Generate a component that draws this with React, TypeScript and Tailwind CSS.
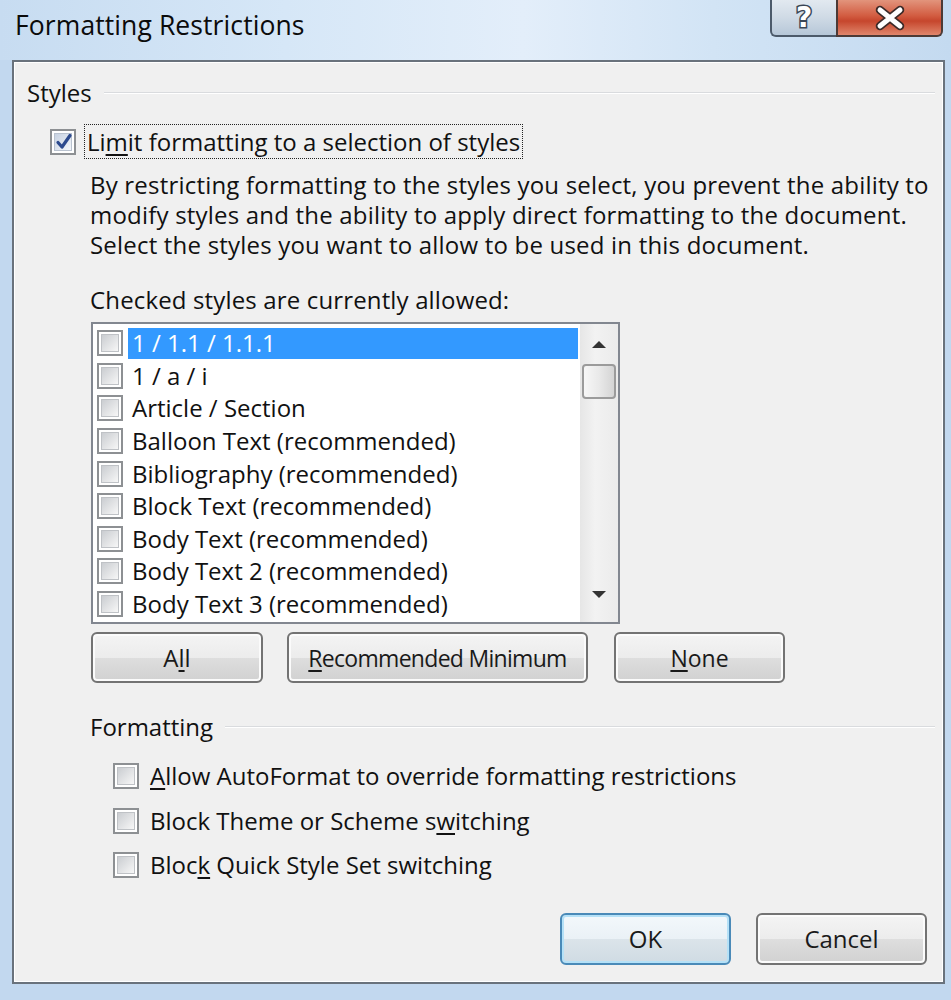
import React from "react";

const styleItems = [
  "1 / 1.1 / 1.1.1",
  "1 / a / i",
  "Article / Section",
  "Balloon Text (recommended)",
  "Bibliography (recommended)",
  "Block Text (recommended)",
  "Body Text (recommended)",
  "Body Text 2 (recommended)",
  "Body Text 3 (recommended)",
];

function CheckBox({ checked = false }: { checked?: boolean }) {
  return (
    <div className="relative w-[26px] h-[26px] shrink-0 border-2 border-[#8d9093] bg-white p-[2px]">
      <div
        className={
          checked
            ? "w-full h-full border border-[#b9c2cf] bg-[linear-gradient(135deg,#c7d2e2,#f3f6fa)]"
            : "w-full h-full border border-[#bfc2c6] bg-[linear-gradient(135deg,#cacdd1,#f7f7f7)]"
        }
      />
      {checked && (
        <svg
          className="absolute left-[3px] top-[2px]"
          width="18"
          height="18"
          viewBox="0 0 18 18"
        >
          <path
            d="M3 9.5 L7 14 L15 2.5"
            fill="none"
            stroke="#2c4a8e"
            strokeWidth="3.2"
            strokeLinecap="round"
            strokeLinejoin="round"
          />
        </svg>
      )}
    </div>
  );
}

function Key({ children }: { children: React.ReactNode }) {
  return <span className="underline underline-offset-[3px] decoration-[1.5px]">{children}</span>;
}

function WinButton({
  children,
  className,
  primary = false,
}: {
  children: React.ReactNode;
  className: string;
  primary?: boolean;
}) {
  return (
    <div
      className={
        "flex items-center justify-center rounded-[6px] border-2 text-[#1a1a1a] " +
        (primary
          ? "border-[#4a8ab8] shadow-[inset_0_0_0_2px_#b5e1f7] bg-[linear-gradient(180deg,#f3f8fb_0%,#eaf1f6_50%,#dbe4ea_50%,#cfdbe3_100%)] "
          : "border-[#737373] shadow-[inset_0_0_0_2px_#fbfbfb] bg-[linear-gradient(180deg,#f4f4f4_0%,#ececec_50%,#dedede_50%,#d1d1d1_100%)] ") +
        className
      }
    >
      {children}
    </div>
  );
}

function GroupHeader({ label, className }: { label: string; className: string }) {
  return (
    <div className={"flex items-center h-[30px] " + className}>
      <span>{label}</span>
      <div className="flex-1 ml-[12px] h-[2px] border-t border-[#d9dbde] border-b border-b-white" />
    </div>
  );
}

export default function App() {
  return (
    <div className="w-[951px] h-[1000px] overflow-hidden bg-[#c2d8ef] font-['Segoe_UI','Open_Sans',sans-serif] text-[#111] flex flex-col">
      {/* Title bar */}
      <div className="h-[60px] shrink-0 flex items-start justify-between pl-[15px] pr-[8px] bg-[linear-gradient(90deg,#c7dcf1_0%,#d6e7f7_30%,#e3eefa_55%,#d2e4f5_75%,#c4daf0_100%)]">
        <div className="pt-[8px] text-[26.5px] leading-[34px] tracking-[0.1px] text-[#0b0b0b]">
          Formatting Restrictions
        </div>
        <div className="flex h-[37px]">
          <div className="w-[66px] h-full flex items-center justify-center rounded-bl-[6px] border-2 border-t-0 border-r-0 border-[#4c5a6a] bg-[linear-gradient(180deg,#e2e9f0_0%,#cfdae5_50%,#b6c7d8_100%)]">
            <span className="text-[28px] font-bold leading-none text-white [paint-order:stroke] [-webkit-text-stroke:3px_#3a4656] font-['DejaVu_Sans',sans-serif]">
              ?
            </span>
          </div>
          <div className="w-[107px] h-full flex items-center justify-center rounded-br-[6px] border-2 border-t-0 border-[#4c3a36] bg-[linear-gradient(180deg,#e2947c_0%,#d25c41_45%,#c6462d_60%,#e0866c_100%)]">
            <svg width="34" height="26" viewBox="0 0 34 26">
              <path d="M7 5 L27 21 M27 5 L7 21" stroke="#3b2a28" strokeWidth="8.5" strokeLinecap="round" />
              <path d="M7 5 L27 21 M27 5 L7 21" stroke="#ffffff" strokeWidth="5" strokeLinecap="round" />
            </svg>
          </div>
        </div>
      </div>

      {/* Dialog body */}
      <div className="ml-[12px] w-[933px] h-[924px] shrink-0 border-2 border-[#69727c] bg-[#f0f0f0] shadow-[inset_1px_1px_0_#ffffff,inset_-1px_-1px_0_#ffffff] flex flex-col text-[24px] leading-[30px]">
        <GroupHeader label="Styles" className="mt-[16px] pl-[13px] pr-[8px]" />

        {/* Limit formatting */}
        <div className="mt-[16px] flex items-center pl-[36px]">
          <CheckBox checked />
          <div className="ml-[8px] h-[35px] flex items-center px-[2px] border-[1.5px] border-dotted border-[#222]">
            Li<Key>m</Key>it formatting to a selection of styles
          </div>
        </div>

        <div className="mt-[11px] pl-[76px] pr-[4px] whitespace-nowrap tracking-[0.2px]">
          <p>By restricting formatting to the styles you select, you prevent the ability to</p>
          <p>modify styles and the ability to apply direct formatting to the document.</p>
          <p>Select the styles you want to allow to be used in this document.</p>
        </div>

        <div className="mt-[25px] pl-[76px] tracking-[0.15px]">Checked styles are currently allowed:</div>

        {/* List box */}
        <div className="mt-[7px] ml-[77px] w-[529px] h-[302px] border-2 border-[#828790] bg-white flex">
          <div className="flex-1 pt-[3px] pl-[4px]">
            {styleItems.map((item, i) => (
              <div key={item} className="h-[32.6px] flex items-center">
                <CheckBox />
                <div
                  className={
                    "ml-[5px] flex-1 h-[31px] flex items-center pl-[4px] whitespace-nowrap " +
                    (i === 0 ? "bg-[#3399ff] text-white" : "")
                  }
                >
                  {item}
                </div>
              </div>
            ))}
          </div>
          {/* Scrollbar */}
          <div className="w-[38px] ml-[2px] h-full flex flex-col items-center bg-[linear-gradient(90deg,#e6e6e6,#f2f2f2_40%,#ebebeb)]">
            <div className="h-[40px] flex items-center justify-center">
              <svg width="16" height="10" viewBox="0 0 16 10">
                <path d="M1 9 L8 2 L15 9 Z" fill="#333" />
              </svg>
            </div>
            <div className="w-[34px] h-[35px] rounded-[4px] border-2 border-[#9b9b9b] bg-[linear-gradient(90deg,#f7f7f7,#e9e9e9_50%,#d4d4d4)]" />
            <div className="flex-1" />
            <div className="h-[38px] flex items-start justify-center pt-[6px]">
              <svg width="16" height="10" viewBox="0 0 16 10">
                <path d="M1 1 L15 1 L8 8 Z" fill="#333" />
              </svg>
            </div>
          </div>
        </div>

        {/* All / Recommended / None */}
        <div className="mt-[8px] ml-[77px] flex h-[51px]">
          <WinButton className="w-[172px] text-[24px]">
            A<Key>l</Key>l
          </WinButton>
          <WinButton className="ml-[24px] w-[301px] text-[23px] tracking-[-0.7px]">
            <Key>R</Key>ecommended Minimum
          </WinButton>
          <WinButton className="ml-[26px] w-[171px] text-[23px]">
            <Key>N</Key>one
          </WinButton>
        </div>

        <GroupHeader label="Formatting" className="mt-[29px] pl-[76px] pr-[8px]" />

        <div className="mt-[12px] pl-[99px] flex flex-col">
          <div className="h-[44.5px] flex items-center gap-[11px]">
            <CheckBox />
            <span>
              <Key>A</Key>llow AutoFormat to override formatting restrictions
            </span>
          </div>
          <div className="h-[44.5px] flex items-center gap-[11px]">
            <CheckBox />
            <span>
              Block Theme or Scheme s<Key>w</Key>itching
            </span>
          </div>
          <div className="h-[44.5px] flex items-center gap-[11px]">
            <CheckBox />
            <span>
              Bloc<Key>k</Key> Quick Style Set switching
            </span>
          </div>
        </div>

        <div className="mt-[25px] flex justify-end pr-[16px]">
          <WinButton primary className="w-[171px] h-[52px] text-[24px]">
            OK
          </WinButton>
          <WinButton className="ml-[25px] w-[171px] h-[52px] text-[24px]">
            Cancel
          </WinButton>
        </div>
      </div>
    </div>
  );
}
